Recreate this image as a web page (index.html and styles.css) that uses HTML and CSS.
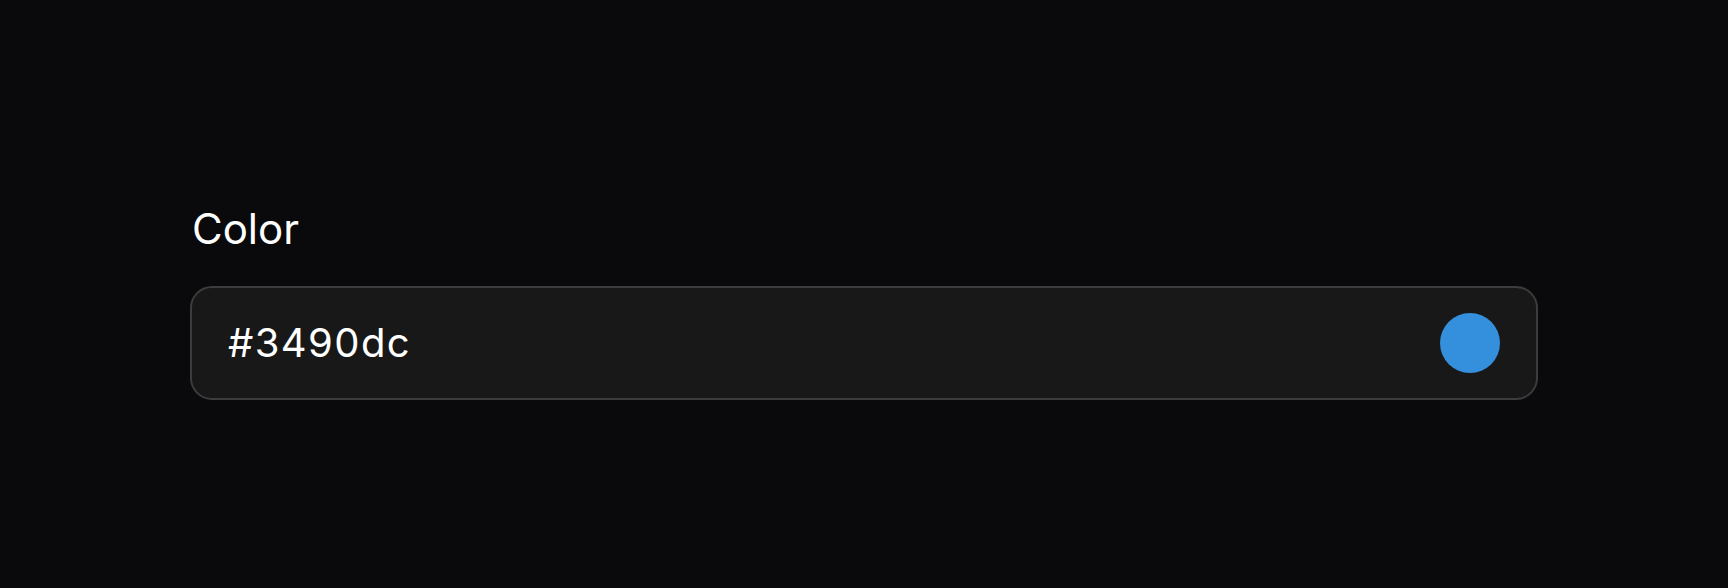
FILE: index.html
```html
<!DOCTYPE HTML>
<html>

<head>
    <meta charset="utf-8">
    <title>Color</title>
    <link rel="stylesheet" href="styles.css">
</head>

<body>
    <div class="field">
        <label class="field-label" for="color">Color</label>
        <div class="color-input">
            <input id="color" class="color-text" type="text" value="#3490dc">
            <span class="swatch"></span>
        </div>
    </div>
</body>

</html>
```

FILE: styles.css
```css
* {
    margin: 0;
    padding: 0;
    box-sizing: border-box;
}

body {
    background: #0a0a0c;
    color: #fff;
    font-family: Inter, "Noto Sans", sans-serif;
}

.field {
    width: 1348px;
    margin: 0 auto;
    padding-top: 204px;
    display: flex;
    flex-direction: column;
    gap: 32px;
}

.field-label {
    padding-left: 2px;
    font-size: 42px;
    line-height: 50px;
    font-weight: 400;
}

.color-input {
    height: 114px;
    display: flex;
    align-items: center;
    padding: 0 36px;
    background: #181818;
    border: 2px solid #3c3c3c;
    border-radius: 22px;
}

.color-text {
    flex: 1;
    background: transparent;
    border: none;
    outline: none;
    color: #fff;
    font-family: inherit;
    font-size: 40px;
    line-height: 48px;
    letter-spacing: 1.4px;
}

.swatch {
    width: 60px;
    height: 60px;
    border-radius: 50%;
    background: #3490dc;
}
```
